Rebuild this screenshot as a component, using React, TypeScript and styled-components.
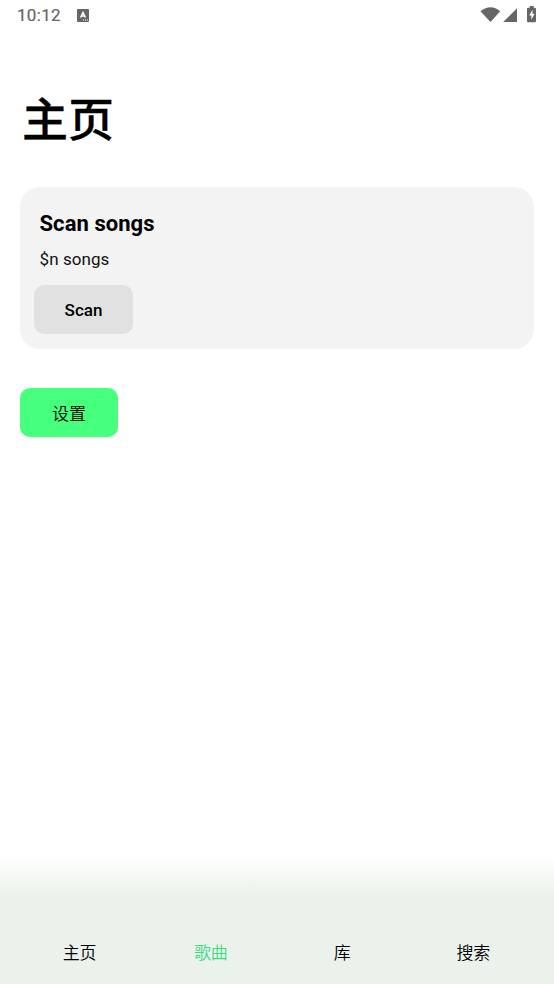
import React from 'react';
import styled, { createGlobalStyle } from 'styled-components';

const Global = createGlobalStyle`
  * { box-sizing: border-box; }
  body { margin: 0; background: #fff; font-family: Roboto, "Noto Sans CJK SC", sans-serif; color: #000; }
  button { font: inherit; border: 0; padding: 0; color: inherit; }
`;

const Screen = styled.div`
  width: 100%;
  height: 984px;
  display: flex;
  flex-direction: column;
  background: #fff;
`;

const StatusBar = styled.header`
  height: 30px;
  padding: 0 14px 0 17px;
  display: flex;
  align-items: center;
  color: #666;
`;

const Clock = styled.time`
  font-size: 17px;
  font-weight: 400;
  letter-spacing: 0.3px;
  line-height: 30px;
  -webkit-text-stroke: 0.2px #666;
  margin-right: 16px;
`;

const StatusIcons = styled.div`
  margin-left: auto;
  display: flex;
  align-items: center;
`;

const Content = styled.main`
  flex: 1;
  padding: 52px 20px 0;
`;

const Title = styled.h1`
  margin: 0;
  height: 105px;
  padding-left: 2px;
  font-size: 46px;
  font-weight: 500;
  line-height: 76px;
  -webkit-text-stroke: 0.3px #000;
`;

const Card = styled.section`
  height: 162px;
  padding: 21px 14px 0;
  border-radius: 20px;
  background: #f3f3f3;
`;

const CardTitle = styled.h2`
  margin: 0 0 0 5.5px;
  font-size: 22px;
  font-weight: 700;
  letter-spacing: 0.06px;
  line-height: 32px;
`;

const CardText = styled.p`
  margin: 3px 0 10px 5.5px;
  font-size: 17px;
  letter-spacing: 0.08px;
  line-height: 32px;
  color: #111;
`;

const Button = styled.button<{ $accent?: boolean }>`
  display: block;
  width: ${p => (p.$accent ? 98 : 99)}px;
  height: 49px;
  margin-top: ${p => (p.$accent ? 39 : 0)}px;
  border-radius: 10px;
  background: ${p => (p.$accent ? '#46ff7c' : '#e1e1e1')};
  font-size: 17px;
  font-weight: ${p => (p.$accent ? 350 : 500)};
`;

const TabBar = styled.nav`
  height: 132px;
  padding: 70px 15px 0 14px;
  display: grid;
  grid-template-columns: repeat(4, 1fr);
  background: linear-gradient(#fff, #fdfefd 8px, #ebf2eb 42px);
`;

const Tab = styled.a<{ $active?: boolean }>`
  height: 62px;
  text-align: center;
  font-size: 17px;
  font-weight: 350;
  line-height: 62px;
  color: ${p => (p.$active ? '#3ddc84' : '#000')};
`;

export default function App() {
  return (
    <Screen>
      <Global />
      <StatusBar>
        <Clock>10:12</Clock>
        <svg width="12" height="13" viewBox="0 0 12 13">
          <rect width="12" height="13" rx="1" fill="#666" />
          <path d="M3.600 8.500 6 3.500 8.400 8.500M4.500 7h3" fill="none" stroke="#fff" strokeWidth="1.600" />
          <path d="M6 11h1m1 0h1m1 0h1" stroke="#fff" strokeWidth="1" />
        </svg>
        <StatusIcons>
          <svg width="60" height="20" viewBox="480 5 60 20" fill="#666">
            <path d="M480.500 11.200Q490.500 3.500 500.200 11.200L490.500 22Z" />
            <path d="M517 8.200V22H503.200Z" />
            <path d="M529.700 6h4v1.700h1q1.300 0 1.300 1.300v12q0 1.200-1.200 1.200h-6.600q-1.200 0-1.200-1.200V9q0-1.300 1.300-1.300h1.400Z" />
            <path d="M532.500 9.700 529.300 15.500h2v4.200l3.200-5.800h-2Z" fill="#fff" />
          </svg>
        </StatusIcons>
      </StatusBar>
      <Content>
        <Title>主页</Title>
        <Card>
          <CardTitle>Scan songs</CardTitle>
          <CardText>$n songs</CardText>
          <Button>Scan</Button>
        </Card>
        <Button $accent>设置</Button>
      </Content>
      <TabBar>
        <Tab>主页</Tab>
        <Tab $active>歌曲</Tab>
        <Tab>库</Tab>
        <Tab>搜索</Tab>
      </TabBar>
    </Screen>
  );
}
